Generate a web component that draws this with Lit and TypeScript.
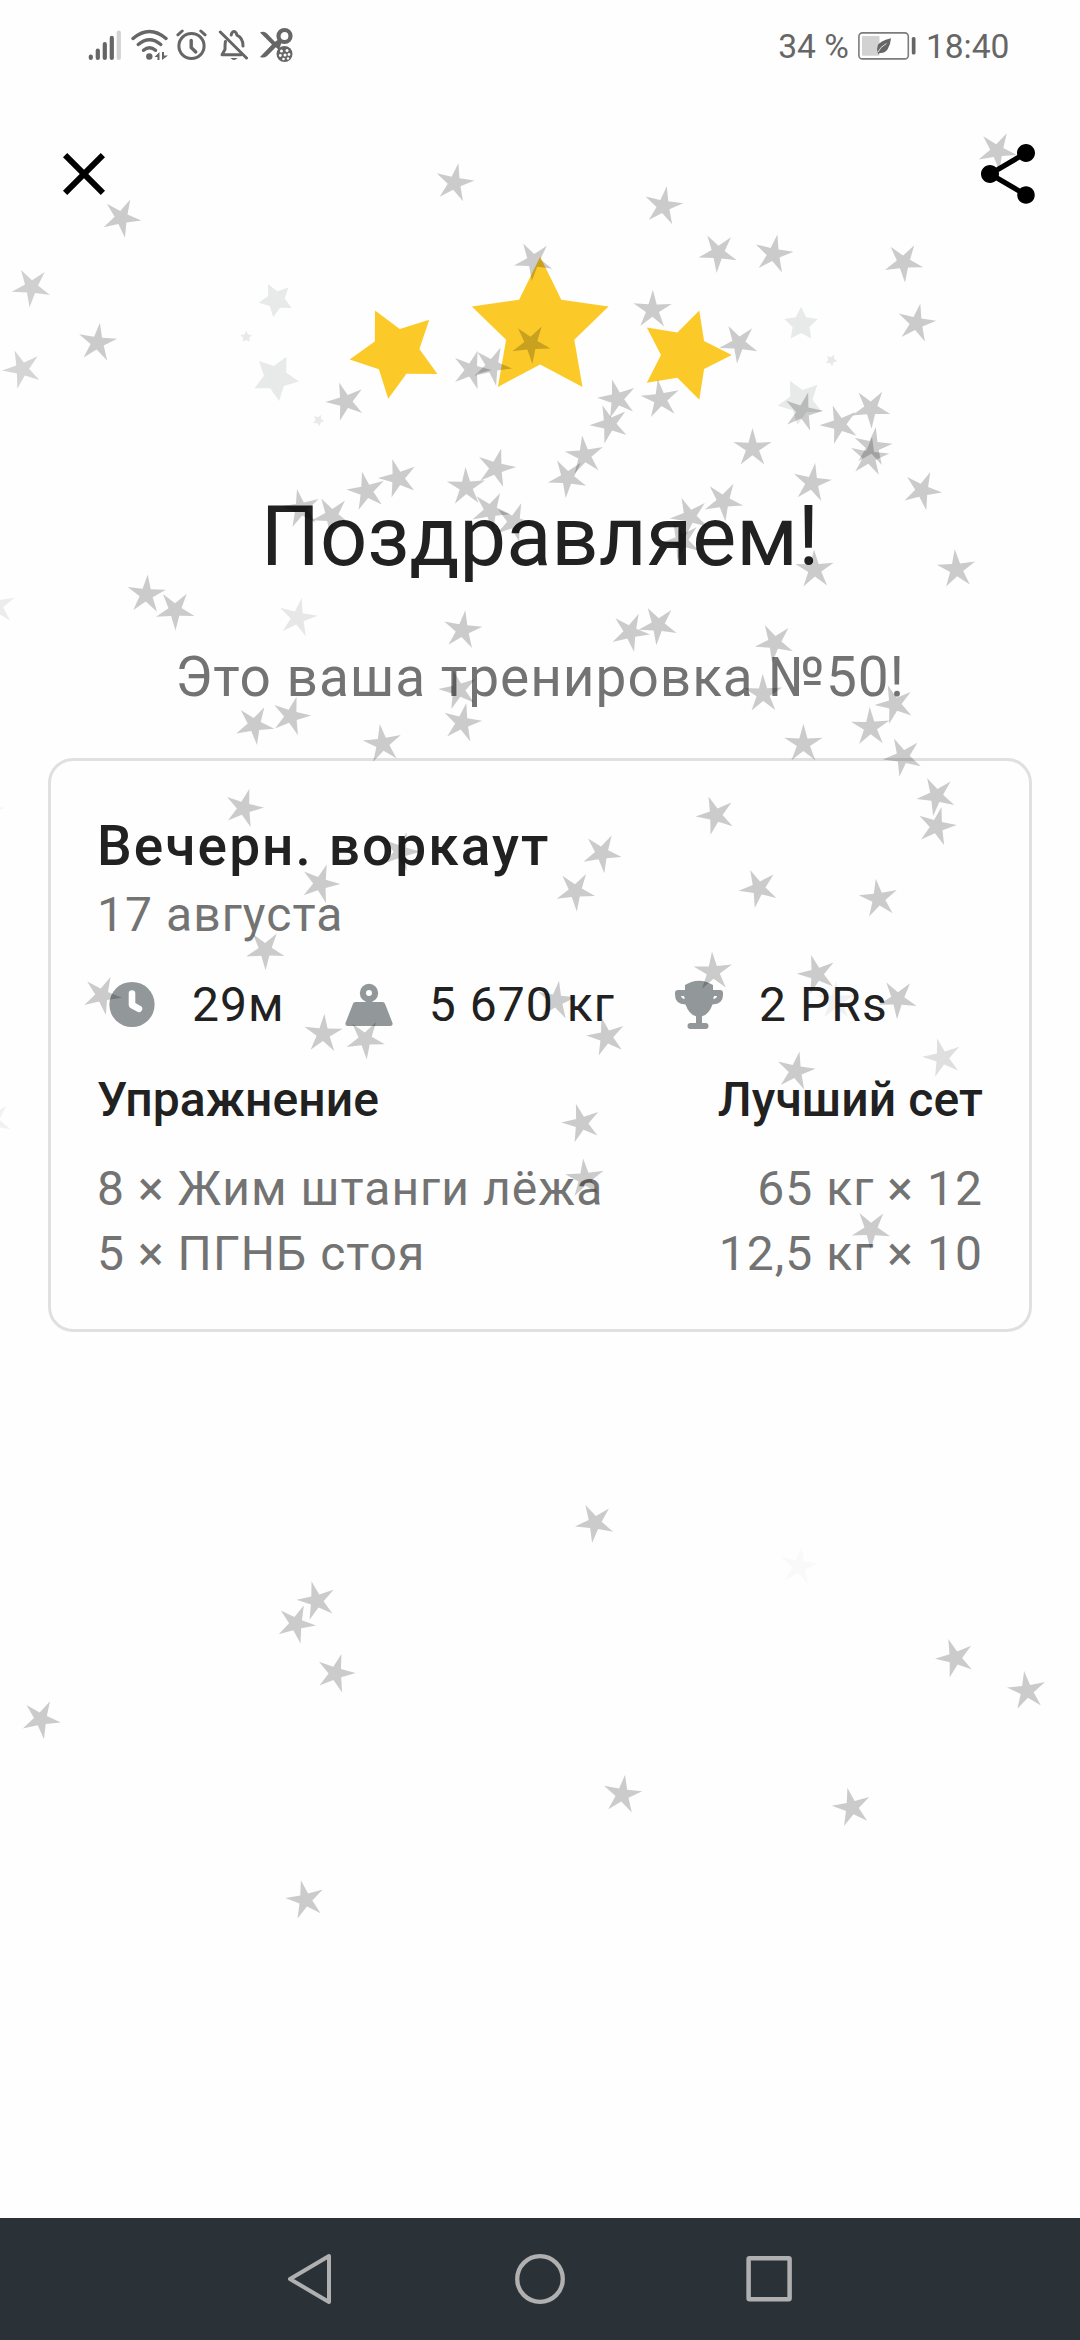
import { LitElement, html, css, svg } from "lit";
import { customElement } from "lit/decorators.js";

type Star = [x: number, y: number, rotation: number, opacity?: number];

const CONFETTI: Star[] = [
  [454.5, 183, 11], [121.4, 217.8, 26], [31.4, 287.2, -31, 0.18], [97.4, 342.7, 7],
  [22.2, 369.2, -22, 0.16], [533.6, 260.9, -31], [531, 343.7, 32], [471.4, 370, 18],
  [492.2, 365.9, 25], [345.7, 401.5, -19], [997, 151, 29], [663.3, 206.1, 10],
  [718, 252.7, -32], [773.5, 254.2, 11], [903.6, 262.3, 32], [652.5, 309.9, 1],
  [916.4, 323.3, 11], [738.8, 343.4, -31], [617.3, 398.9, -15], [660.5, 399.2, -8],
  [803, 411.8, 15], [839.6, 424.5, -20], [870.9, 408.5, 34], [609.6, 424.1, -21],
  [752.5, 448.3, 0], [872.6, 447, 9], [869.3, 457, 8], [584.6, 455.5, -7],
  [567.5, 477.9, -31], [689.8, 516.5, -24], [723.3, 501.3, 30], [681.5, 540.7, -24],
  [812, 483, 9], [922.1, 490.5, 24], [814.7, 569.7, -2], [956.5, 569.3, -5],
  [630.2, 632.1, 25], [658.1, 625.2, -31], [774.6, 642.8, -29], [763.1, 694, -1],
  [894.7, 704.3, -20], [870.4, 727.3, -2], [803.4, 744, 0], [902.9, 756.8, -26],
  [398.1, 478.3, -17], [366.5, 491.2, -13], [300.9, 508.7, -11], [331.7, 515.8, -31],
  [496, 468.1, 15], [466.2, 487.1, -2], [490.6, 510.7, 28], [514, 522.2, 21],
  [146.3, 594.6, 4], [175.1, 610.2, 35], [297.6, 617.8, 12, 0.09], [-3.5, 606, -7, 0.07],
  [462.5, 630.3, 8], [458.5, 690, -15], [254.5, 724.9, 29], [291, 716.2, 16],
  [462.1, 722.9, 12], [382.6, 743.9, -8], [243.8, 808.2, 16], [400.5, 851.7, 18],
  [320.1, 883.7, 19], [265.2, 950, 35], [102, 995.3, 25], [323.3, 1034, 3],
  [365.3, 1039.3, 32], [-15.5, 809, 15, 0.04], [-7.6, 1120.8, -29, 0.05],
  [715.7, 815.3, -21], [936.3, 795.9, -27], [936.6, 826.5, 14], [601.8, 853.2, 29],
  [575.4, 891.2, 32], [758.7, 888.2, -25], [878.6, 898.8, -8], [713.1, 971.8, -3],
  [817, 974.2, -17], [836, 1001, 0, 0.05], [897.7, 999.1, 38], [556.2, 1000.7, 8],
  [606.3, 1036.8, -14], [795.6, 1071.3, 11], [942.3, 1057.8, -15, 0.12],
  [581.5, 1123.2, -16], [584.9, 1178.7, -5], [871, 1229.6, 37], [594.9, 1522.9, -28],
  [799, 1566.3, 9, 0.02], [316.7, 1600.8, -15], [296, 1623.8, 23], [335.5, 1673.3, 17],
  [40.8, 1719.2, 27], [955.2, 1658.1, -20], [1026.9, 1691, -8], [622.3, 1794.7, 8],
  [851.9, 1807.5, -13], [305.4, 1899.9, -13],
];

/** Vertices of a five-pointed star, rotated clockwise from upright. */
function starPoints(cx: number, cy: number, outer: number, inner: number, rotation: number): string {
  return Array.from({ length: 10 }, (_, i) => {
    const r = i % 2 ? inner : outer;
    const a = ((i * 36 + rotation) * Math.PI) / 180;
    return `${(cx + r * Math.sin(a)).toFixed(1)},${(cy - r * Math.cos(a)).toFixed(1)}`;
  }).join(" ");
}

const STATUS_ICONS = html`
  <svg class="signal" width="34" height="34" viewBox="0 0 34 34">
    <g stroke="#666" stroke-width="4.2" stroke-linecap="round">
      <path d="M2.8 27.500v1.500M9.800 21.500v7.500M16.800 15.200v13.800M23.800 8.900v20.100" />
      <path stroke="#d2d2d2" d="M30.800 3.500v25.500" />
    </g>
  </svg>
  <svg class="wifi" width="38" height="34" viewBox="0 0 38 34">
    <g fill="none" stroke="#666" stroke-width="3.4" stroke-linecap="round">
      <path d="M2 9.500Q18.500-4.500 35 9.500" />
      <path d="M7.200 15.500Q18.500 6 29.800 15.500" />
      <path d="M12.500 21.300Q18.500 16 24.500 21.300" />
    </g>
    <circle cx="18.300" cy="27.500" r="3.200" fill="#666" />
    <path d="M23.500 28l5-5v8h-2v-3zM31 23v8l6-4.500h-4V23z" fill="#666" />
  </svg>
  <svg class="alarm" width="32" height="34" viewBox="0 0 32 34">
    <g fill="none" stroke="#666" stroke-width="3" stroke-linecap="round">
      <circle cx="15.500" cy="17" r="12.600" />
      <path stroke-width="3.400" d="M15.200 11.500v7l4.600 4.400" />
      <path d="M1.900 5.800L6.200 2M29.100 5.800L24.800 2" />
    </g>
  </svg>
  <svg class="bell" width="30" height="34" viewBox="0 0 30 34">
    <g fill="none" stroke="#666" stroke-width="3" stroke-linecap="round" stroke-linejoin="round">
      <path d="M7.500 12.500Q7 14 7 20.500L4 25.800H23" />
      <path d="M13.200 6L13.700 4.300Q16 .8 18.300 4.300L19 6.200Q25 9 25 17" />
      <path d="M2.300 3L28.500 29" />
    </g>
    <path d="M12.500 29h7q-3.500 4-7 0z" fill="#666" />
  </svg>
  <svg class="scissors" width="34" height="36" viewBox="0 0 34 36">
    <circle cx="25.500" cy="9" r="6" fill="none" stroke="#666" stroke-width="4.200" />
    <path d="M1 5.500q4-2 7 1l10 10.500-1 3L8 29q-3 2.500-7 1l12-12.500z" fill="#666" />
    <path d="M13 17l7-5 3 2-3 9z" fill="#666" />
    <circle cx="25.500" cy="27" r="8" fill="#666" />
    <g fill="#fefefe">
      <circle cx="22.500" cy="24" r="1.500" /><circle cx="28" cy="23.500" r="1.500" />
      <circle cx="21.300" cy="28.500" r="1.400" /><circle cx="26" cy="28" r="1.500" />
      <circle cx="30" cy="27.500" r="1.400" /><circle cx="24.500" cy="32" r="1.300" />
      <circle cx="29" cy="31.500" r="1.200" />
    </g>
  </svg>
`;

const BATTERY = html`
  <svg class="battery" width="58" height="28" viewBox="0 0 58 28">
    <rect x=".9" y=".9" width="49.400" height="26" rx="3.500" fill="none" stroke="#7c7c7c" stroke-width="1.600" />
    <rect x="4" y="4" width="17.500" height="19.700" rx="1" fill="#d2d2d2" />
    <path d="M20 21.500Q17 13 24 9.500Q27 7.500 33 6.200Q32.500 13 29.500 17.500Q26.500 21.500 21.500 21L20 22.500z" fill="#666" />
    <path d="M20 20Q22 15 28.500 11.500" fill="none" stroke="#fefefe" stroke-width=".8" />
    <rect x="53.800" y="5" width="3.700" height="17.500" rx="1.600" fill="#666" />
  </svg>
`;

const CLOCK = svg`
  <circle cx="36" cy="36.500" r="22.600" />
  <path d="M36 25.500v11.500l7 3.800" fill="none" stroke="#fefefe" stroke-width="6.600"
    stroke-linecap="round" stroke-linejoin="round" />`;
const WEIGHT = svg`
  <circle cx="36" cy="25" r="6.100" fill="none" stroke="#92979a" stroke-width="6.200" />
  <path d="M22.500 34h27q2 0 2.700 2.200L59.500 55q.6 3-2.300 3H14.800q-2.900 0-2.300-3l7.300-18.800Q20.500 34 22.500 34z" />`;
const TROPHY = svg`
  <path d="M22 17q14-8.500 28 0v5h7q3 0 3 3v2q0 9-10.500 9.500Q46 46.500 39 48.300V55h3.500q3 0 3 3t-3 3h-15q-3 0-3-3t3-3H33v-6.700Q26 46.500 22.500 36.500 12 36 12 27v-2q0-3 3-3h7z" />
  <path d="M18 28h3l.8 3q-3.400-.5-3.800-3zM54 28h-3l-.8 3q3.400-.5 3.800-3z" fill="#fefefe" />`;

const STATS = [
  { icon: CLOCK, value: "29м" },
  { icon: WEIGHT, value: "5 670 кг" },
  { icon: TROPHY, value: "2 PRs" },
];

const EXERCISES = [
  { name: "8 × Жим штанги лёжа", best: "65 кг × 12" },
  { name: "5 × ПГНБ стоя", best: "12,5 кг × 10" },
];

@customElement("status-bar")
class StatusBar extends LitElement {
  static styles = css`
    :host { display: flex; justify-content: space-between; height: 90px; padding: 0 70.5px 0 88px; box-sizing: border-box; }
    .left { display: flex; align-items: flex-start; padding-top: 29px; }
    .wifi { margin-left: 9px; }
    .alarm { margin-left: 7px; }
    .bell { margin-left: 10px; }
    .scissors { margin-left: 11px; margin-top: -2px; }
    .right { display: flex; align-items: flex-start; padding-top: 26px; font-size: 33.6px; line-height: 42px; color: #666; }
    .battery { margin: 6px 10px 0 9px; }
  `;
  render() {
    return html`
      <div class="left">${STATUS_ICONS}</div>
      <div class="right"><span>34 %</span>${BATTERY}<span>18:40</span></div>
    `;
  }
}

@customElement("workout-card")
class WorkoutCard extends LitElement {
  static styles = css`
    :host {
      display: block; box-sizing: border-box; margin: 0 48px; padding: 52px 46px 43px;
      border: 3px solid #e0e0e0; border-radius: 25px;
      font-size: 48px; line-height: 65px; letter-spacing: 1.05px; color: #737373;
    }
    .title { font-size: 55px; line-height: 66px; font-weight: 500; color: #212121; letter-spacing: 2.07px; }
    .date { margin-top: 3px; }
    .stats { display: flex; gap: 48px; margin: 29px 0 0 -1px; }
    .stat { display: flex; align-items: center; gap: 24px; height: 56px; color: #212121; }
    .icon { flex: none; fill: #92979a; }
    .row { display: flex; justify-content: space-between; }
    .head { margin: 35px 0 24px; font-weight: 500; color: #212121; letter-spacing: 0.1px; }
  `;
  render() {
    return html`
      <div class="title">Вечерн. воркаут</div>
      <div class="date">17 августа</div>
      <div class="stats">
        ${STATS.map((s) => html`
          <div class="stat">
            <svg class="icon" width="72" height="72" viewBox="0 0 72 72">${s.icon}</svg>
            <span>${s.value}</span>
          </div>`)}
      </div>
      <div class="row head"><span>Упражнение</span><span>Лучший сет</span></div>
      ${EXERCISES.map((e) => html`<div class="row"><span>${e.name}</span><span>${e.best}</span></div>`)}
    `;
  }
}

@customElement("system-nav")
class SystemNav extends LitElement {
  static styles = css`
    :host { display: flex; justify-content: center; gap: 169px; align-items: center; height: 122px; background: #2a3238; }
  `;
  render() {
    return html`
      <svg width="60" height="60" viewBox="0 0 60 60" fill="none" stroke="#b0b0b0" stroke-width="4" stroke-linejoin="round">
        <path d="M9 30L48 7V53z" />
      </svg>
      <svg width="60" height="60" viewBox="0 0 60 60" fill="none" stroke="#b0b0b0" stroke-width="4.300">
        <circle cx="30" cy="30" r="22.800" />
      </svg>
      <svg width="60" height="60" viewBox="0 0 60 60" fill="none" stroke="#b0b0b0" stroke-width="4.500" stroke-linejoin="round">
        <rect x="9.600" y="9.200" width="41" height="41" rx="1" />
      </svg>
    `;
  }
}

@customElement("app-root")
class AppRoot extends LitElement {
  static styles = css`
    :host {
      display: flex; flex-direction: column; position: relative; overflow: hidden;
      width: 1080px; height: 2340px; background: #fefefe;
      font-family: Roboto, "Liberation Sans", sans-serif; color: #212121;
    }
    .toolbar { display: flex; justify-content: space-between; padding: 48px 36px 0 48px; }
    .emblem { align-self: center; margin-top: 40px; }
    .heading { margin: 58px 0 0; text-align: center; font-size: 83px; line-height: 98px; font-weight: 400; }
    .subtitle { margin: 58px 0 0; text-align: center; font-size: 55px; line-height: 66px; letter-spacing: 0.97px; color: #737373; }
    workout-card { margin-top: 48px; }
    .spacer { flex: 1; }
    .confetti { position: absolute; left: 0; top: 0; pointer-events: none; }
  `;
  render() {
    return html`
      <status-bar></status-bar>
      <div class="toolbar">
        <svg width="72" height="72" viewBox="0 0 24 24">
          <path d="M19 6.410L17.590 5 12 10.590 6.410 5 5 6.410 10.590 12 5 17.590 6.410 19 12 13.410 17.590 19 19 17.590 13.410 12z" />
        </svg>
        <svg width="72" height="72" viewBox="0 0 24 24">
          <path d="M18 16.080c-.76 0-1.440.3-1.960.77L8.910 12.700c.05-.23.09-.46.09-.7s-.04-.47-.09-.7l7.050-4.110c.54.5 1.250.81 2.040.81 1.660 0 3-1.340 3-3s-1.340-3-3-3-3 1.340-3 3c0 .24.04.47.09.7L8.040 9.810C7.500 9.310 6.790 9 6 9c-1.660 0-3 1.340-3 3s1.340 3 3 3c.79 0 1.500-.31 2.040-.81l7.120 4.160c-.05.21-.08.43-.08.65 0 1.610 1.310 2.920 2.920 2.920 1.610 0 2.920-1.310 2.920-2.920s-1.310-2.920-2.920-2.920z" />
        </svg>
      </div>
      <svg class="emblem" width="640" height="180" viewBox="220 250 640 180">
        <g fill="#fcca28">
          <polygon points=${starPoints(395.9, 352.5, 46.8, 23.8, -26.5)} />
          <polygon points=${starPoints(540.2, 328.7, 71.9, 35.9, 0)} />
          <polygon points=${starPoints(684.8, 355.1, 47, 23.8, 18)} />
        </g>
        <g fill="#e8eaea">
          <polygon points=${starPoints(276, 299.9, 17.6, 8.8, -27)} />
          <polygon points=${starPoints(246.2, 336.9, 6.1, 3, 0)} />
          <polygon points=${starPoints(275.6, 377.7, 23.6, 11.8, 27.4)} />
          <polygon points=${starPoints(318.5, 420.3, 6.1, 3, 26)} />
          <polygon points=${starPoints(801, 324.3, 17.6, 8.8, 0)} />
          <polygon points=${starPoints(831.3, 360.2, 6.1, 3, 27)} />
          <polygon points=${starPoints(800.9, 401.7, 23.6, 11.8, -27.8)} />
        </g>
      </svg>
      <h1 class="heading">Поздравляем!</h1>
      <p class="subtitle">Это ваша тренировка №50!</p>
      <workout-card></workout-card>
      <div class="spacer"></div>
      <system-nav></system-nav>
      <svg class="confetti" width="1080" height="2218" viewBox="0 0 1080 2218">
        ${CONFETTI.map(([x, y, rot, o = 0.2]) => svg`
          <polygon points=${starPoints(x, y, 20.2, 6.9, rot)} fill-opacity=${o} />`)}
      </svg>
    `;
  }
}
